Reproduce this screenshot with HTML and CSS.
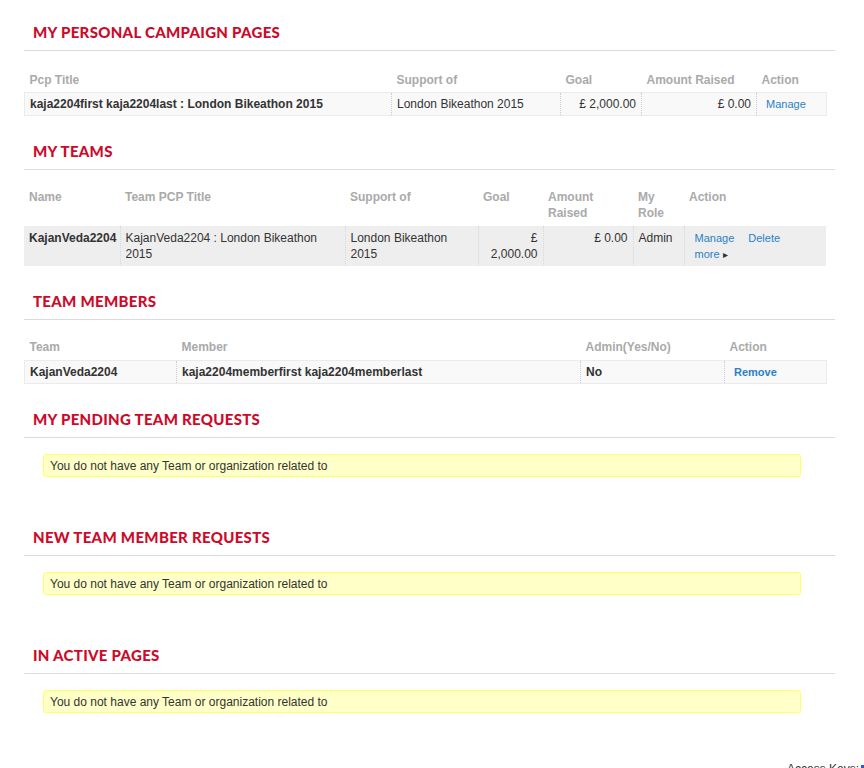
FILE: index.html
```html
<!DOCTYPE html>
<html>
<head>
<meta charset="utf-8">
<title>My Pages</title>
<link rel="stylesheet" href="styles.css">
</head>
<body>
<div class="page">
  <section class="block">
    <h2 class="block-title">My Personal Campaign Pages</h2>
    <table class="grid grid-pcp">
      <colgroup><col class="c367"><col class="c169"><col class="c81"><col class="c115"><col class="c70"></colgroup>
      <thead>
        <tr><th>Pcp Title</th><th>Support of</th><th>Goal</th><th>Amount Raised</th><th>Action</th></tr>
      </thead>
      <tbody>
        <tr class="row-light">
          <td class="strong">kaja2204first kaja2204last : London Bikeathon 2015</td>
          <td>London Bikeathon 2015</td>
          <td class="num">£ 2,000.00</td>
          <td class="num">£ 0.00</td>
          <td><a class="link" href="#">Manage</a></td>
        </tr>
      </tbody>
    </table>
  </section>

  <section class="block">
    <h2 class="block-title">My Teams</h2>
    <table class="grid grid-teams">
      <colgroup><col class="c96"><col class="c225"><col class="c133"><col class="c65"><col class="c90"><col class="c51"><col class="c142"></colgroup>
      <thead>
        <tr><th>Name</th><th>Team PCP Title</th><th>Support of</th><th>Goal</th><th>Amount Raised</th><th>My Role</th><th>Action</th></tr>
      </thead>
      <tbody>
        <tr class="row-dark">
          <td class="strong">KajanVeda2204</td>
          <td>KajanVeda2204 : London Bikeathon 2015</td>
          <td>London Bikeathon 2015</td>
          <td class="num">£ 2,000.00</td>
          <td class="num">£ 0.00</td>
          <td>Admin</td>
          <td class="actions">
            <a class="link" href="#">Manage</a><a class="link" href="#">Delete</a><br>
            <a class="link" href="#">more <span class="caret">&#9656;</span></a>
          </td>
        </tr>
      </tbody>
    </table>
  </section>

  <section class="block">
    <h2 class="block-title">Team Members</h2>
    <table class="grid grid-members">
      <colgroup><col class="c152"><col class="c404"><col class="c144"><col class="c102"></colgroup>
      <thead>
        <tr><th>Team</th><th>Member</th><th>Admin(Yes/No)</th><th>Action</th></tr>
      </thead>
      <tbody>
        <tr class="row-light">
          <td class="strong">KajanVeda2204</td>
          <td class="strong">kaja2204memberfirst kaja2204memberlast</td>
          <td class="strong">No</td>
          <td class="remove-cell"><a class="link link-bold" href="#">Remove</a></td>
        </tr>
      </tbody>
    </table>
  </section>

  <section class="block">
    <h2 class="block-title">My Pending Team Requests</h2>
    <div class="notice">You do not have any Team or organization related to</div>
  </section>

  <section class="block">
    <h2 class="block-title">New Team Member Requests</h2>
    <div class="notice">You do not have any Team or organization related to</div>
  </section>

  <section class="block">
    <h2 class="block-title">In Active Pages</h2>
    <div class="notice">You do not have any Team or organization related to</div>
  </section>

  <div class="footer">Access Keys:<span class="key-icon"></span></div>
</div>
</body>
</html>
```

FILE: styles.css
```css
html, body {
  margin: 0;
  padding: 0;
  overflow: hidden;
  background: #fff;
}
body {
  font-family: "Liberation Sans", Arial, sans-serif;
  font-size: 12px;
  line-height: 16px;
  color: #333;
}
.page {
  width: 811px;
  margin-left: 24px;
  padding-top: 22px;
}
.block {
  margin-bottom: 25px;
}
.block-title {
  margin: 0;
  padding: 0 9px 8px;
  border-bottom: 1px solid #dcdcdc;
  font-family: "Lato", "Open Sans", sans-serif;
  font-weight: 900;
  font-size: 15px;
  line-height: 20px;
  letter-spacing: 0.3px;
  text-transform: uppercase;
  color: #cc0a2a;
}
.grid {
  width: 802px;
  margin-top: 15px;
  border-collapse: collapse;
  table-layout: fixed;
}
.grid-teams { margin-top: 13px; }
.grid-members { margin-top: 12px; }
.grid th {
  text-align: left;
  vertical-align: top;
  font-weight: bold;
  color: #aaa;
  padding: 6px 5px 4px;
}
.grid-teams th, .grid-members th { padding-bottom: 5px; }
.grid-members th { padding-top: 7px; }
.grid td {
  vertical-align: top;
  padding: 3px 5px 3px;
  border-left: 1px dotted #ccc;
}
.grid td:first-child {
  border-left: none;
}
.row-light td {
  background: #f9f9f9;
  border-top: 1px solid #ebebeb;
  border-bottom: 1px solid #ebebeb;
}
.row-light td:first-child { border-left: 1px solid #ebebeb; }
.row-light td:last-child { border-right: 1px solid #ebebeb; }
.row-dark td {
  background: #eee;
  padding-top: 4px;
  padding-bottom: 3px;
  border-left-color: #d8d8d8;
}
.strong { font-weight: bold; }
.num { text-align: right; }
.c367 { width: 367px; } .c169 { width: 169px; } .c81 { width: 81px; } .c115 { width: 115px; } .c70 { width: 70px; }
.c96 { width: 96px; } .c225 { width: 225px; } .c133 { width: 133px; } .c65 { width: 65px; } .c90 { width: 90px; } .c51 { width: 51px; } .c142 { width: 142px; }
.c152 { width: 152px; } .c404 { width: 404px; } .c144 { width: 144px; } .c102 { width: 102px; }
.link {
  color: #2a7fc6;
  font-size: 11px;
  text-decoration: none;
}
.link-bold { font-weight: bold; }
.grid-pcp .link { padding-left: 4px; }
.grid td.actions { padding-left: 10px; }
.actions .link { margin-right: 14px; }
.caret { font-size: 10px; color: #333; }
.grid td.remove-cell { padding-left: 9px; }
.notice {
  margin: 16px 34px 50px 19px;
  padding: 3px 6px 2px;
  background: #ffffc8;
  border: 1px solid #ffff66;
  border-radius: 3px;
  color: #333;
}
.footer {
  margin-left: 763px;
  margin-top: -2px;
  white-space: nowrap;
  color: #333;
}
.key-icon {
  display: inline-block;
  width: 6px;
  height: 10px;
  margin-left: 2px;
  background: #3355dd;
  vertical-align: middle;
}
```
